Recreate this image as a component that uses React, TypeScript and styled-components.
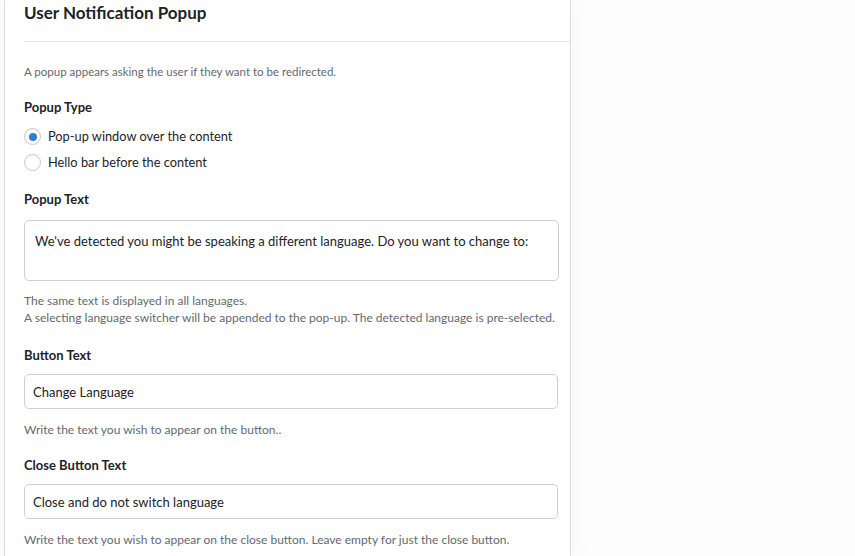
import React from 'react';
import styled, { createGlobalStyle } from 'styled-components';

const Global = createGlobalStyle`
  * { box-sizing: border-box; }
  body {
    margin: 0;
    background: #fdfdfd;
    font-family: Lato, 'Liberation Sans', sans-serif;
    color: #1d2327;
  }
`;

const Page = styled.div`
  padding-left: 4px;
  height: 556px;
  overflow: hidden;
`;

const Card = styled.section`
  width: 567px;
  background: #fff;
  border: 1px solid #dcdcde;
  border-top: none;
  border-radius: 0 0 4px 4px;
  box-shadow: 0 0 28px rgba(0, 0, 0, 0.035);
  padding: 0 0 14px;
`;

const Header = styled.header`
  margin-left: 19px;
  height: 42px;
  border-bottom: 1px solid #e2e2e4;
  display: flex;
  align-items: center;
  padding-bottom: 16px;
`;

const Title = styled.h2`
  margin: 0;
  font-size: 17px;
  font-weight: 700;
  color: #1d2327;
`;

const Body = styled.div`
  padding: 21px 12px 0 19px;
  display: flex;
  flex-direction: column;
`;

const Description = styled.p<{ $gap?: number; $size?: number }>`
  margin: 0 0 ${p => p.$gap ?? 0}px;
  font-size: ${p => p.$size ?? 12}px;
  line-height: 17px;
  color: #646970;
`;

const Label = styled.h3<{ $gap?: number }>`
  margin: 0 0 ${p => p.$gap ?? 12}px;
  font-size: 13px;
  line-height: 17px;
  font-weight: 700;
  color: #1d2327;
`;

const RadioList = styled.div`
  display: flex;
  flex-direction: column;
  gap: 9px;
  margin-bottom: 20px;
`;

const RadioRow = styled.label`
  display: flex;
  align-items: center;
  gap: 7px;
  font-size: 12.8px;
  line-height: 17px;
  color: #1d2327;
`;

const RadioDot = styled.span<{ $checked?: boolean }>`
  width: 17px;
  height: 17px;
  border-radius: 50%;
  border: 1px solid #c7c8cb;
  background: #fff;
  display: grid;
  place-items: center;
  box-shadow: inset 0 1px 2px rgba(0, 0, 0, 0.05);

  &::after {
    content: '';
    width: 8px;
    height: 8px;
    border-radius: 50%;
    background: ${p => (p.$checked ? '#2f7fd0' : 'transparent')};
  }
`;

const TextArea = styled.div`
  width: 535px;
  height: 61px;
  border: 1px solid #cfd0d2;
  border-radius: 5px;
  padding: 12px 10px;
  font-size: 13px;
  line-height: 17px;
  color: #1d2327;
  margin-bottom: 11px;
`;

const Input = styled.div<{ $gap?: number }>`
  width: 534px;
  height: 35px;
  border: 1px solid #cfd0d2;
  border-radius: 5px;
  padding: 0 8px;
  display: flex;
  align-items: center;
  font-size: 13px;
  color: #1d2327;
  margin-bottom: ${p => p.$gap ?? 12}px;
`;

export default function App() {
  return (
    <Page>
      <Global />
      <Card>
        <Header>
          <Title>User Notification Popup</Title>
        </Header>
        <Body>
          <Description $gap={19} $size={11.5}>
            A popup appears asking the user if they want to be redirected.
          </Description>

          <Label>Popup Type</Label>
          <RadioList>
            <RadioRow><RadioDot $checked />Pop-up window over the content</RadioRow>
            <RadioRow><RadioDot />Hello bar before the content</RadioRow>
          </RadioList>

          <Label>Popup Text</Label>
          <TextArea>We've detected you might be speaking a different language. Do you want to change to:</TextArea>
          <Description>The same text is displayed in all languages.</Description>
          <Description $gap={21}>
            A selecting language switcher will be appended to the pop-up. The detected language is pre-selected.
          </Description>

          <Label $gap={10}>Button Text</Label>
          <Input>Change Language</Input>
          <Description $gap={19}>Write the text you wish to appear on the button..</Description>

          <Label $gap={10}>Close Button Text</Label>
          <Input $gap={12}>Close and do not switch language</Input>
          <Description>Write the text you wish to appear on the close button. Leave empty for just the close button.</Description>
        </Body>
      </Card>
    </Page>
  );
}
